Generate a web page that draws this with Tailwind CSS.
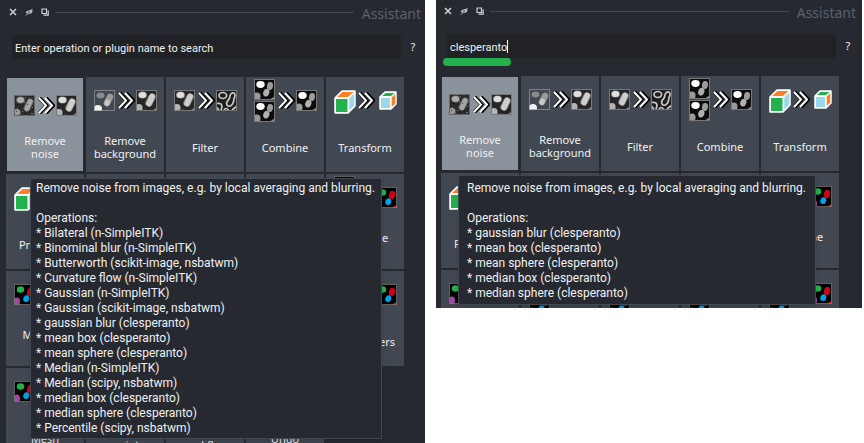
<!DOCTYPE html>
<html lang="en">
<head>
<meta charset="utf-8">
<title>Assistant</title>
<script src="https://cdn.jsdelivr.net/npm/@tailwindcss/browser@4"></script>
</head>
<body class="bg-white font-['Noto_Sans',sans-serif] text-[12px] text-[#f0f1f2]">
<svg class="hidden" aria-hidden="true">
  <defs>
    <linearGradient id="haze" x1="0" y1="0" x2="0" y2="1"><stop offset="0" stop-color="#2c2c2c"/><stop offset=".6" stop-color="#888"/><stop offset="1" stop-color="#eee"/></linearGradient>
    <symbol id="cells" viewBox="0 0 21 21">
      <rect width="21" height="21" fill="#262626"/>
      <ellipse cx="6.500" cy="5" rx="4.500" ry="3.600" fill="#888"/><ellipse cx="6.500" cy="5" rx="3.700" ry="2.900" fill="#e0e0e0"/>
      <path d="M16 7L13 13" stroke="#7c7c7c" stroke-width="7.400" stroke-linecap="round"/><path d="M16.200 6.500L13 13.500" stroke="#cecece" stroke-width="5.600" stroke-linecap="round"/>
      <ellipse cx="3" cy="18" rx="3.600" ry="4" fill="#b4b4b4"/><path d="M7 21q2-3 5 0z" fill="#888"/><path d="M16 21l5-4v4z" fill="#888"/>
      <rect x=".5" y=".5" width="20" height="20" fill="none" stroke="#777"/>
    </symbol>
    <symbol id="noisy" viewBox="0 0 21 21">
      <rect width="21" height="21" fill="#2a2a2a"/>
      <ellipse cx="6.500" cy="5" rx="4.300" ry="3.400" fill="#777"/><ellipse cx="6.500" cy="5" rx="3.500" ry="2.700" fill="#b0b0b0"/>
      <path d="M16 7L13 13" stroke="#666" stroke-width="7" stroke-linecap="round"/><path d="M16.200 6.500L13 13.500" stroke="#a4a4a4" stroke-width="5" stroke-linecap="round"/>
      <ellipse cx="3" cy="18" rx="3.600" ry="4" fill="#999"/>
      <path d="M2 2.500h1M11 3.500h1M3 9.500h2M8 10.500h2M18 14.500h2M10 18.500h2M15 17.500h1M13 9.500h1M2 16.500h1M5 19.500h1" stroke="#111" stroke-opacity=".6"/>
      <path d="M3 13.500h1M10 7.500h1M17 18.500h2M8 16.500h1M18 12.500h1M11 2.500h1" stroke="#777"/>
      <rect x=".5" y=".5" width="20" height="20" fill="none" stroke="#666"/>
    </symbol>
    <symbol id="hazy" viewBox="0 0 21 21">
      <rect width="21" height="21" fill="url(#haze)"/>
      <ellipse cx="6.500" cy="5.500" rx="4" ry="3" fill="#8a8a8a"/>
      <path d="M16 7L13 13" stroke="#999" stroke-width="6.500" stroke-linecap="round"/><path d="M13.500 12L13 13.500" stroke="#c8c8c8" stroke-width="5" stroke-linecap="round"/>
      <ellipse cx="4" cy="19" rx="4" ry="4" fill="#f2f2f2"/>
      <rect x=".5" y=".5" width="20" height="20" fill="none" stroke="#999" stroke-opacity=".7"/>
    </symbol>
    <symbol id="edges" viewBox="0 0 21 21">
      <rect width="21" height="21" fill="#1e1e1e"/>
      <g fill="none" stroke="#c8c8c8" stroke-width="1.700"><ellipse cx="6.800" cy="5.500" rx="3.800" ry="3"/><path d="M14 5.500q1.500-3.500 4-2.500q2 2 0 5.500q0 3-1.500 5.500q-2 3-4.500 2q-2.500-2-.5-5q2.500-2 2.500-5.500z"/><path d="M1 13.500q4.500-1 5 3l-1 4M1 17.500l2 3M8 20q2-3 4.500 0M16 20l4.500-3.500"/></g>
      <rect x=".5" y=".5" width="20" height="20" fill="none" stroke="#777"/>
    </symbol>
    <symbol id="bright" viewBox="0 0 21 21">
      <rect width="21" height="21" fill="#0c0c0c"/>
      <ellipse cx="16" cy="7" rx="3" ry="4" fill="#9c9c9c" transform="rotate(10 16 7)"/><ellipse cx="12.500" cy="13.500" rx="3" ry="4" fill="#b0b0b0" transform="rotate(20 12 13)"/><ellipse cx="3" cy="17.500" rx="3.600" ry="4" fill="#9a9a9a"/><path d="M15 21l6-4v4z" fill="#888"/>
      <ellipse cx="6.500" cy="5.500" rx="4.200" ry="3.400" fill="#fff"/>
      <rect x=".5" y=".5" width="20" height="20" fill="none" stroke="#777"/>
    </symbol>
    <symbol id="labels" viewBox="0 0 21 21">
      <rect width="21" height="21" fill="#000"/>
      <ellipse cx="6.500" cy="5.500" rx="3.700" ry="3.200" fill="#22b14c"/><ellipse cx="16" cy="8" rx="3" ry="4.200" fill="#d0021b" transform="rotate(15 16 8)"/><ellipse cx="12.500" cy="14.500" rx="2.900" ry="3.400" fill="#00a2e8" transform="rotate(25 12 14)"/><ellipse cx="3" cy="17.500" rx="3" ry="4" fill="#a349a4"/><path d="M15 21l6-3v3z" fill="#ed1c24"/>
      <rect x=".5" y=".5" width="20" height="20" fill="none" stroke="#777" stroke-opacity=".8"/>
    </symbol>
    <symbol id="chevrons" viewBox="0 0 17 17">
      <path d="M1.500 1l7 7.500l-7 7.500M8 1l7 7.500l-7 7.500" fill="none" stroke="#000" stroke-width="4"/>
      <path d="M1 1l7 7.500l-7 7.500M7 1l7 7.500l-7 7.500" fill="none" stroke="#fff" stroke-width="2"/>
    </symbol>
    <symbol id="box" viewBox="0 0 22 24">
      <path d="M1 8L8 1H21V16L14 23H1z" fill="#fff" stroke="#fff" stroke-width="1.500" stroke-linejoin="round"/>
      <path d="M3 7L8.500 2H19.500L14 7z" fill="#ff7f27"/><path d="M2 9H13.500V22H2z" fill="#22b14c"/><path d="M15.200 8.500L20.300 3.500V15.500L15.200 20.500z" fill="#99d9ea"/>
    </symbol>
    <symbol id="smallbox" viewBox="0 0 18 19">
      <path d="M1 6L6 1H17V13L12 18H1z" fill="#fff" stroke="#fff" stroke-width="1.500" stroke-linejoin="round"/>
      <path d="M3 5L6.500 2H15.500L12 5z" fill="#22b14c"/><path d="M2 7H11V17H2z" fill="#99d9ea"/><path d="M12.700 6.500L16.300 3V12.500L12.700 16z" fill="#ff7f27"/>
    </symbol>
    <symbol id="i-noise" viewBox="-1 0 64 44"><use href="#noisy" y="11" width="21" height="21"/><use href="#chevrons" x="24" y="13" width="17" height="17"/><use href="#cells" x="42" y="11" width="21" height="21"/></symbol>
    <symbol id="i-background" viewBox="-1 0 64 44"><use href="#hazy" y="11" width="21" height="21"/><use href="#chevrons" x="24" y="13" width="17" height="17"/><use href="#cells" x="42" y="11" width="21" height="21"/></symbol>
    <symbol id="i-filter" viewBox="-1 0 64 44"><use href="#cells" y="11" width="21" height="21"/><use href="#chevrons" x="24" y="13" width="17" height="17"/><use href="#edges" x="42" y="11" width="21" height="21"/></symbol>
    <symbol id="i-combine" viewBox="-1 0 64 44"><use href="#bright" width="21" height="21"/><use href="#bright" y="22" width="21" height="21"/><use href="#chevrons" x="24" y="13" width="17" height="17"/><use href="#bright" x="42" y="11" width="21" height="21"/></symbol>
    <symbol id="i-transform" viewBox="-1 0 64 44"><use href="#box" y="11" width="22" height="24"/><use href="#chevrons" x="24" y="13" width="17" height="17"/><use href="#smallbox" x="45" y="12" width="18" height="19"/></symbol>
    <symbol id="i-labels" viewBox="-1 0 64 44"><use href="#labels" y="11" width="21" height="21"/><use href="#chevrons" x="24" y="13" width="17" height="17"/><use href="#labels" x="42" y="11" width="21" height="21"/></symbol>
    <symbol id="i-labels2" viewBox="-1 0 64 44"><use href="#labels" width="21" height="21"/><use href="#labels" y="22" width="21" height="21"/><use href="#chevrons" x="24" y="13" width="17" height="17"/><use href="#labels" x="42" y="11" width="21" height="21"/></symbol>
    <symbol id="w-close" viewBox="0 0 8 8"><path d="M1 1l6 6M7 1l-6 6" stroke="#d0d2d5" stroke-width="1.500"/></symbol>
    <symbol id="w-hide" viewBox="0 0 8 8"><path d="M.3 4.500Q3 .8 7.700 2.500Q7 8 .3 4.500z" fill="#b4b7bb"/><path d="M1 7.500L7.500 .8" stroke="#c5c8cb" stroke-width="1"/><circle cx="4" cy="4" r="1" fill="#6a6d72"/></symbol>
    <symbol id="w-float" viewBox="0 0 8 8"><path d="M1 1h4.500v4.500H1z" fill="none" stroke="#d0d2d5" stroke-width="1.200"/><path d="M7.200 2.500v4.700H2.500" fill="none" stroke="#d0d2d5" stroke-width="1.200"/></symbol>
  </defs>
</svg>
<main class="flex items-start gap-[11px] pr-[2px]">

  <section class="relative h-screen flex-[425] overflow-hidden bg-[#262930]" aria-label="Assistant with all operations">
    <header class="flex h-6 items-center gap-2 pl-[9px] pr-1">
      <button aria-label="Close" class="size-2"><svg class="size-2"><use href="#w-close"/></svg></button>
      <button aria-label="Hide" class="size-2"><svg class="size-2"><use href="#w-hide"/></svg></button>
      <button aria-label="Float" class="size-2"><svg class="size-2"><use href="#w-float"/></svg></button>
      <div class="ml-[-2px] h-px flex-1 bg-[#414851]"></div>
      <h2 class="pt-[3px] text-[14px] leading-5 text-[#5a626c]">Assistant</h2>
    </header>
    <div class="mt-[11px] flex items-center gap-2 pl-3 pr-2">
      <input type="search" aria-label="Search operations" placeholder="Enter operation or plugin name to search" class="h-6 min-w-0 flex-1 rounded-xs bg-[#212225] px-[3px] pt-[2px] font-[Roboto,sans-serif] text-[11px] outline-none placeholder:text-[#f0f1f2] placeholder:opacity-100">
      <button class="w-2 text-[11px]">?</button>
    </div>
    <div class="mt-[18px] grid auto-rows-[95px] grid-cols-5 gap-[2px] pl-[6px] pr-[21px] text-[11px] leading-[13px]" id="left-grid">
      <button class="m-px flex flex-col items-center bg-[#8a929b] pt-[6px]"><svg class="h-11 w-16 shrink-0"><use href="#i-noise"/></svg><span class="mt-[3px] flex h-8 items-center">Remove<br>noise</span></button>
    </div>
    <div role="tooltip" class="absolute left-[30px] top-[178px] w-[352px] border border-[#414851] bg-[#262930] px-[5px] py-[2px] font-[Roboto,sans-serif] leading-[15px] whitespace-nowrap shadow-md">
      <p>Remove noise from images, e.g. by local averaging and blurring.</p>
      <p class="mt-[15px]">Operations:</p>
      <ul>
        <li>* Bilateral (n-SimpleITK)</li><li>* Binominal blur (n-SimpleITK)</li><li>* Butterworth (scikit-image, nsbatwm)</li><li>* Curvature flow (n-SimpleITK)</li><li>* Gaussian (n-SimpleITK)</li><li>* Gaussian (scikit-image, nsbatwm)</li><li>* gaussian blur (clesperanto)</li><li>* mean box (clesperanto)</li><li>* mean sphere (clesperanto)</li><li>* Median (n-SimpleITK)</li><li>* Median (scipy, nsbatwm)</li><li>* median box (clesperanto)</li><li>* median sphere (clesperanto)</li><li>* Percentile (scipy, nsbatwm)</li>
      </ul>
    </div>
  </section>

  <section class="relative h-[308px] flex-[426] overflow-hidden bg-[#262930]" aria-label="Assistant with filtered operations">
    <header class="flex h-[22px] items-center gap-2 pl-2 pr-[6px]">
      <button aria-label="Close" class="size-2"><svg class="size-2"><use href="#w-close"/></svg></button>
      <button aria-label="Hide" class="size-2"><svg class="size-2"><use href="#w-hide"/></svg></button>
      <button aria-label="Float" class="size-2"><svg class="size-2"><use href="#w-float"/></svg></button>
      <div class="ml-[-2px] h-px flex-1 bg-[#414851]"></div>
      <h2 class="pt-[3px] text-[14px] leading-5 text-[#5a626c]">Assistant</h2>
    </header>
    <div class="relative mt-3 flex items-center gap-2 pl-[11px] pr-[10px]">
      <input type="search" aria-label="Search operations" value="clesperanto" class="h-6 min-w-0 flex-1 rounded-xs bg-[#212225] px-[3px] pt-[2px] font-[Roboto,sans-serif] text-[11px] outline-none">
      <button class="w-2 text-[11px]">?</button>
      <i class="absolute left-[71px] top-[6px] h-[13px] w-px bg-white"></i>
      <i class="absolute left-[7px] top-6 h-2 w-[68px] rounded bg-[#22b14c]"></i>
    </div>
    <div class="mt-[18px] grid auto-rows-[95px] grid-cols-5 gap-[2px] pl-[5px] pr-[23px] text-[11px] leading-[13px]" id="right-grid">
    </div>
    <div role="tooltip" class="absolute left-[22px] top-[175px] w-[358px] rounded-xs border border-[#414851] bg-[#262930] px-2 pb-[3px] pt-[5px] font-[Roboto,sans-serif] leading-[15px] whitespace-nowrap shadow-md">
      <p>Remove noise from images, e.g. by local averaging and blurring.</p>
      <p class="mt-[15px]">Operations:</p>
      <ul>
        <li>* gaussian blur (clesperanto)</li><li>* mean box (clesperanto)</li><li>* mean sphere (clesperanto)</li><li>* median box (clesperanto)</li><li>* median sphere (clesperanto)</li>
      </ul>
    </div>
  </section>
</main>
<script>
  const rows = [
    ['background', 'Remove<br>background'], ['filter', 'Filter'], ['combine', 'Combine'], ['transform', 'Transform'],
    ['transform', 'Projection'], ['labels', ''], ['labels', ''], ['labels', ''], ['labels2', 'Combine<br>&nbsp;'],
    ['labels', 'Measure<br>&nbsp;'], ['labels2', ''], ['labels2', ''], ['labels2', ''], ['labels2', 'Label filters'],
    ['labels', 'Mesh'], ['labels', 'Generate<br>script'], ['labels', 'Save<br>workflow'], ['labels', 'Undo']
  ];
  const left = document.getElementById('left-grid');
  const right = document.getElementById('right-grid');
  right.append(left.firstElementChild.cloneNode(true));
  for (const grid of [left, right]) {
    for (const [icon, label] of rows) {
      grid.insertAdjacentHTML('beforeend', `<button class="flex flex-col items-center bg-[#414851] pt-[2px]"><svg class="h-11 w-16 shrink-0"><use href="#i-${icon}"/></svg><span class="mt-2 flex h-8 items-center">${label}</span></button>`);
    }
  }
</script>
</body>
</html>
